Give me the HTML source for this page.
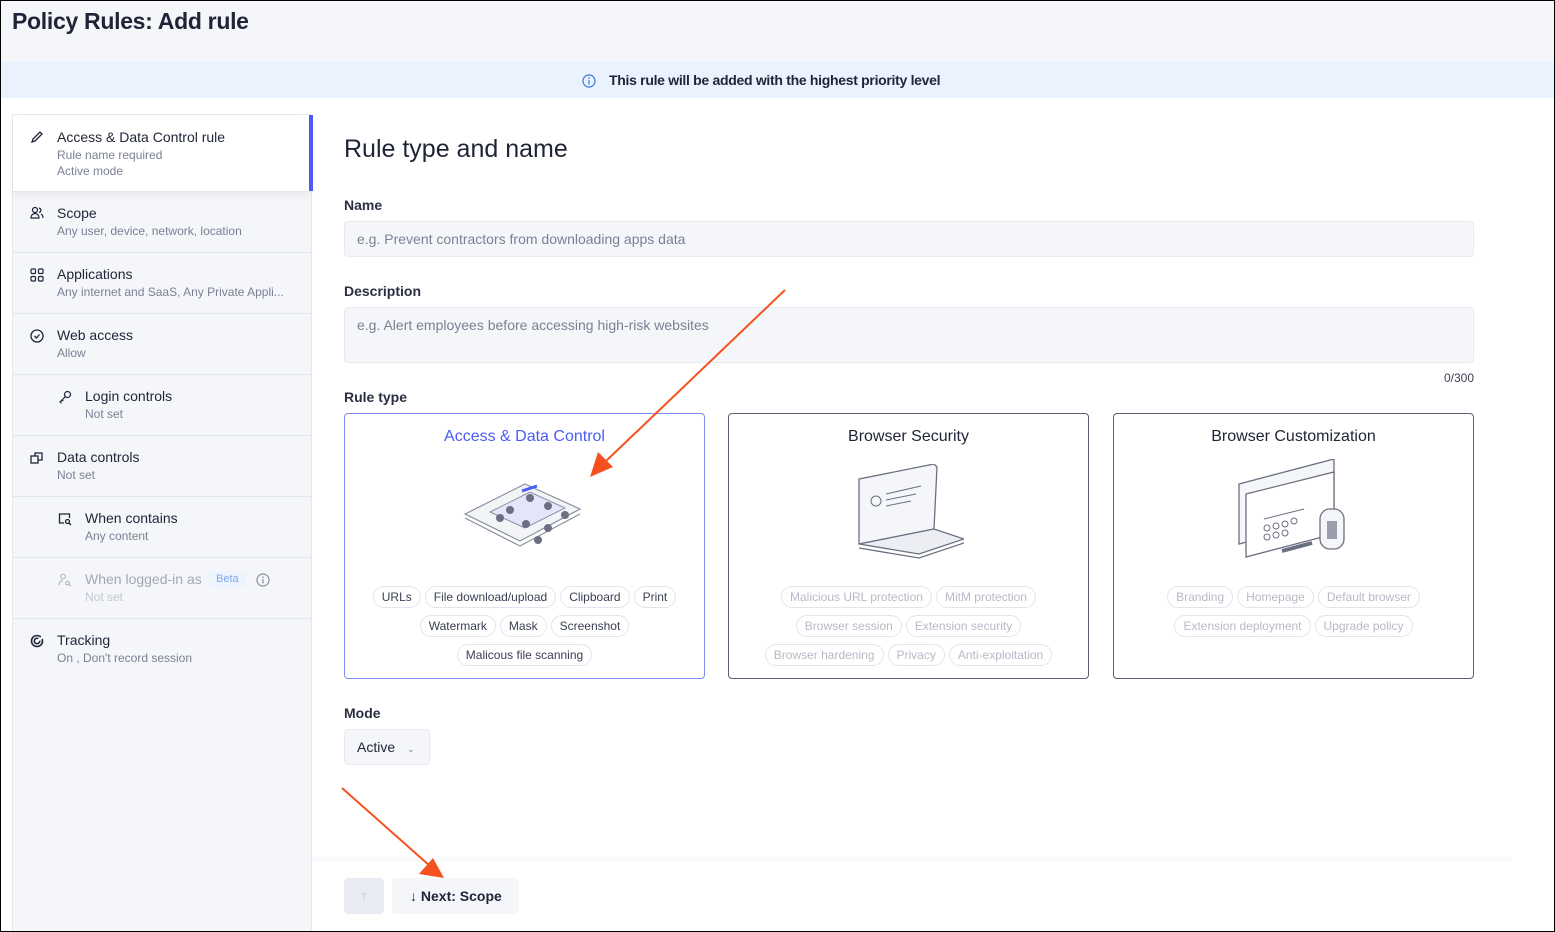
<!DOCTYPE html>
<html><head><meta charset="utf-8"><style>
*{box-sizing:border-box;margin:0;padding:0}
body{width:1555px;height:932px;overflow:hidden;font-family:"Liberation Sans",sans-serif;color:#1f2437;background:#fff;position:relative}
.frame{position:absolute;inset:0;border:1px solid #000;z-index:50;pointer-events:none}
.hdr{position:absolute;left:0;top:0;width:1555px;height:62px;background:#f5f6fa}
.hdr h1{position:absolute;left:12px;top:8px;font-size:23px;font-weight:bold;color:#1f2437;letter-spacing:-0.3px}
.ban{position:absolute;left:0;top:62px;width:1555px;height:36px;background:#eaf2fd;font-size:14px;font-weight:bold;color:#1f2437}
.ban span{position:absolute;left:609px;top:10px;letter-spacing:-0.3px}
.side{position:absolute;left:12px;top:114px;width:300px;height:818px;background:#f5f6fa;border:1px solid #e6e8ee}
.it{position:absolute;left:0;width:298px;border-bottom:1px solid #e3e5ec}
.it .t{position:absolute;font-size:14px;color:#1f2437}
.it .s{position:absolute;font-size:12px;color:#7b8194;line-height:16px}
.ic{position:absolute;width:14px;height:14px}
.main h2{position:absolute;left:344px;top:135px;font-size:25px;font-weight:normal;color:#1f2437}
.lbl{position:absolute;left:344px;font-size:14px;font-weight:bold;color:#2a2f42}
.inp{position:absolute;left:344px;width:1130px;background:#f5f6fa;border:1px solid #e8eaf0;border-radius:4px;font-size:14px;color:#7b8194;padding:10px 12px}
.card{position:absolute;top:413px;width:361px;height:266px;border:1px solid #5b5f72;border-radius:4px;text-align:center}
.card .ct{position:absolute;left:0;right:0;top:14px;font-size:16px;color:#1f2437}
.tags{position:absolute;left:6px;right:6px;top:172px;text-align:center;line-height:0}
.tag{display:inline-block;font-size:12px;line-height:14px;padding:3px 8px;border:1px solid #e3e5ec;border-radius:12px;margin:0 2px 7px;color:#3b4054}
.dis .tag{color:#b7bac6}
</style></head><body>
<div class="frame"></div>
<div class="hdr"><h1>Policy Rules: Add rule</h1></div>
<div class="ban"><svg style="position:absolute;left:582px;top:12px" width="14" height="14" viewBox="0 0 14 14"><circle cx="7" cy="7" r="6" fill="none" stroke="#3b73e0" stroke-width="1.2"/><rect x="6.4" y="6" width="1.2" height="4.5" fill="#3b73e0"/><circle cx="7" cy="4.2" r=".8" fill="#3b73e0"/></svg><span>This rule will be added with the highest priority level</span></div>

<div class="side">
 <div class="it" style="top:0;height:77px;background:#fff;box-shadow:0 4px 8px rgba(0,0,0,.05)">
  <div style="position:absolute;right:-2px;top:0;width:4px;height:76px;background:#4a5cf5"></div>
  <svg class="ic" style="left:17px;top:15px" viewBox="0 0 14 14"><path d="M2 12l1-3 7-7 2 2-7 7z" fill="none" stroke="#1f2437" stroke-width="1.3"/></svg>
  <div class="t" style="left:44px;top:14px">Access &amp; Data Control rule</div>
  <div class="s" style="left:44px;top:32px">Rule name required<br>Active mode</div></div>
 <div class="it" style="top:77px;height:61px">
  <svg class="ic" style="left:17px;top:14px" viewBox="0 0 14 14"><circle cx="5" cy="4" r="2.5" fill="none" stroke="#1f2437" stroke-width="1.2"/><path d="M1 12c0-3 2-4.5 4-4.5s4 1.5 4 4.5zM9 2a2.3 2.3 0 010 4.5M11 8c1.5.7 2 2 2 4" fill="none" stroke="#1f2437" stroke-width="1.2"/></svg>
  <div class="t" style="left:44px;top:13px">Scope</div><div class="s" style="left:44px;top:31px">Any user, device, network, location</div></div>
 <div class="it" style="top:138px;height:61px">
  <svg class="ic" style="left:17px;top:15px" viewBox="0 0 14 14"><g fill="none" stroke="#1f2437" stroke-width="1.2"><rect x="1" y="1" width="4.5" height="4.5" rx="1"/><rect x="8.5" y="1" width="4.5" height="4.5" rx="1"/><rect x="1" y="8.5" width="4.5" height="4.5" rx="1"/><rect x="8.5" y="8.5" width="4.5" height="4.5" rx="1"/></g></svg>
  <div class="t" style="left:44px;top:13px">Applications</div><div class="s" style="left:44px;top:31px">Any internet and SaaS, Any Private Appli...</div></div>
 <div class="it" style="top:199px;height:61px">
  <svg class="ic" style="left:17px;top:15px" viewBox="0 0 14 14"><circle cx="7" cy="7" r="6" fill="none" stroke="#1f2437" stroke-width="1.3"/><path d="M4.5 7l2 2 3-3.5" fill="none" stroke="#1f2437" stroke-width="1.3"/></svg>
  <div class="t" style="left:44px;top:13px">Web access</div><div class="s" style="left:44px;top:31px">Allow</div></div>
 <div class="it" style="top:260px;height:61px">
  <svg class="ic" style="left:45px;top:15px" viewBox="0 0 14 14"><circle cx="9.5" cy="4.5" r="3" fill="none" stroke="#1f2437" stroke-width="1.2"/><path d="M7.5 6.5L2 12l1.5 1.2M4 10l1.3 1.2" fill="none" stroke="#1f2437" stroke-width="1.2"/></svg>
  <div class="t" style="left:72px;top:13px">Login controls</div><div class="s" style="left:72px;top:31px">Not set</div></div>
 <div class="it" style="top:321px;height:61px">
  <svg class="ic" style="left:17px;top:15px" viewBox="0 0 14 14"><g fill="none" stroke="#1f2437" stroke-width="1.3"><rect x="1" y="5" width="7" height="7"/><path d="M5 5V2h7v7H8"/></g></svg>
  <div class="t" style="left:44px;top:13px">Data controls</div><div class="s" style="left:44px;top:31px">Not set</div></div>
 <div class="it" style="top:382px;height:61px">
  <svg class="ic" style="left:45px;top:15px" viewBox="0 0 14 14"><g fill="none" stroke="#1f2437" stroke-width="1.3"><path d="M6 11H1.5V2h10v4"/><circle cx="9.5" cy="9.5" r="2"/><path d="M11 11l2 2"/></g></svg>
  <div class="t" style="left:72px;top:13px">When contains</div><div class="s" style="left:72px;top:31px">Any content</div></div>
 <div class="it" style="top:443px;height:61px">
  <svg class="ic" style="left:45px;top:15px" viewBox="0 0 14 14"><g fill="none" stroke="#b7bac6" stroke-width="1.2"><circle cx="5" cy="3.5" r="2.3"/><path d="M1 12c0-3 2-4.5 4-4.5"/><circle cx="9.5" cy="10" r="1.8"/><path d="M11 11.5l2 1.5"/></g></svg>
  <div class="t" style="left:72px;top:13px;color:#a3a7b5">When logged-in as</div>
  <div style="position:absolute;left:196px;top:13px;background:#edf4fe;color:#7fa8ee;font-size:11px;padding:2px 7px;border-radius:3px">Beta</div>
  <svg style="position:absolute;left:243px;top:15px" width="14" height="14" viewBox="0 0 14 14"><circle cx="7" cy="7" r="6" fill="none" stroke="#8a8fa0" stroke-width="1.2"/><rect x="6.4" y="6" width="1.2" height="4.5" fill="#8a8fa0"/><circle cx="7" cy="4.2" r=".8" fill="#8a8fa0"/></svg>
  <div class="s" style="left:72px;top:31px;color:#c4c7d1">Not set</div></div>
 <div class="it" style="top:504px;height:61px;border:none">
  <svg class="ic" style="left:17px;top:15px" viewBox="0 0 14 14"><circle cx="7" cy="7" r="5.5" fill="none" stroke="#1f2437" stroke-width="1.6"/><circle cx="7" cy="7" r="2.7" fill="none" stroke="#1f2437" stroke-width="1.6"/><path d="M7 7l6-4" stroke="#fff" stroke-width="2.5"/></svg>
  <div class="t" style="left:44px;top:13px">Tracking</div><div class="s" style="left:44px;top:31px">On , Don't record session</div></div>
</div>

<div class="main">
<h2>Rule type and name</h2>
<div class="lbl" style="top:197px">Name</div>
<div class="inp" style="top:221px;height:36px;padding-top:9px">e.g. Prevent contractors from downloading apps data</div>
<div class="lbl" style="top:283px">Description</div>
<div class="inp" style="top:307px;height:56px;padding-top:9px">e.g. Alert employees before accessing high-risk websites</div>
<div style="position:absolute;left:1420px;top:371px;width:54px;text-align:right;font-size:12px;color:#3b4054">0/300</div>
<div class="lbl" style="top:389px">Rule type</div>

<div class="card" style="left:344px;border-color:#7d8cf6">
 <div class="ct" style="color:#4a5cf5">Access &amp; Data Control</div>
 <svg style="position:absolute;left:115px;top:60px" width="125" height="80" viewBox="0 0 125 80">
  <path d="M5 40l60-30 55 25-60 32z" fill="#f3f4f8" stroke="#8a8fa0" stroke-width="1.2"/>
  <path d="M5 44l55 28 60-32" fill="none" stroke="#8a8fa0" stroke-width="1.2"/>
  <path d="M30 38l40-20 35 16-40 20z" fill="#e3e6fb" stroke="#8a8fa0"/>
  <path d="M62 17l15-5" stroke="#4a5cf5" stroke-width="3"/>
  <g fill="#6b6f80"><circle cx="50" cy="36" r="4"/><circle cx="70" cy="24" r="4"/><circle cx="88" cy="32" r="4"/><circle cx="105" cy="41" r="4"/><circle cx="66" cy="50" r="4"/><circle cx="88" cy="54" r="4"/><circle cx="78" cy="66" r="4"/><circle cx="40" cy="44" r="4"/></g>
 </svg>
 <div class="tags"><span class="tag">URLs</span><span class="tag">File download/upload</span><span class="tag">Clipboard</span><span class="tag">Print</span><br><span class="tag">Watermark</span><span class="tag">Mask</span><span class="tag">Screenshot</span><br><span class="tag">Malicous file scanning</span></div>
</div>

<div class="card dis" style="left:728px">
 <div class="ct">Browser Security</div>
 <svg style="position:absolute;left:125px;top:50px" width="110" height="95" viewBox="0 0 110 95">
  <path d="M5 15l75-15 3 3-3 62-75 15z" fill="#f5f6fa" stroke="#6b6f80" stroke-width="1.3"/>
  <path d="M5 80l60 10 45-15-30-10z" fill="#eceef4" stroke="#6b6f80" stroke-width="1.3"/>
  <path d="M5 84l60 10 45-15" fill="none" stroke="#6b6f80" stroke-width="1.3"/>
  <circle cx="22" cy="37" r="5" fill="none" stroke="#6b6f80"/>
  <path d="M32 30l35-8M32 36l30-6M32 42l25-5" stroke="#6b6f80"/>
 </svg>
 <div class="tags"><span class="tag">Malicious URL protection</span><span class="tag">MitM protection</span><br><span class="tag">Browser session</span><span class="tag">Extension security</span><br><span class="tag">Browser hardening</span><span class="tag">Privacy</span><span class="tag">Anti-exploitation</span></div>
</div>

<div class="card dis" style="left:1113px">
 <div class="ct">Browser Customization</div>
 <svg style="position:absolute;left:120px;top:45px" width="115" height="100" viewBox="0 0 115 100">
  <path d="M5 25l95-25v60L5 85z" fill="#f5f6fa" stroke="#6b6f80" stroke-width="1.3"/>
  <path d="M12 35l88-22v62L12 98z" fill="#fff" stroke="#6b6f80" stroke-width="1.3"/>
  <path d="M30 60l40-10" stroke="#6b6f80"/>
  <g fill="none" stroke="#6b6f80"><circle cx="33" cy="69" r="3"/><circle cx="42" cy="67" r="3"/><circle cx="51" cy="65" r="3"/><circle cx="60" cy="62" r="3"/><circle cx="33" cy="78" r="3"/><circle cx="42" cy="76" r="3"/><circle cx="51" cy="74" r="3"/></g>
  <rect x="86" y="50" width="24" height="40" rx="10" fill="#f5f6fa" stroke="#6b6f80" stroke-width="1.3"/>
  <rect x="93" y="62" width="10" height="18" fill="#9a9eac"/>
  <path d="M48 92l30-8" stroke="#6b6f80" stroke-width="4"/>
 </svg>
 <div class="tags"><span class="tag">Branding</span><span class="tag">Homepage</span><span class="tag">Default browser</span><br><span class="tag">Extension deployment</span><span class="tag">Upgrade policy</span></div>
</div>

<div class="lbl" style="top:705px">Mode</div>
<div style="position:absolute;left:344px;top:729px;width:86px;height:36px;background:#f5f6fa;border:1px solid #e8eaf0;border-radius:4px;font-size:14px;padding:9px 12px;color:#1f2437">Active <span style="font-size:9px;color:#7b8194;margin-left:8px">&#8964;</span></div>

<div style="position:absolute;left:312px;top:856px;width:1200px;height:6px;background:#fafbfc"></div>
<div style="position:absolute;left:344px;top:878px;width:40px;height:36px;background:#e9ebf2;border-radius:4px;color:#c4c7d1;font-size:13px;text-align:center;line-height:36px">↑</div>
<div style="position:absolute;left:392px;top:878px;width:127px;height:36px;background:#f5f6fa;border-radius:4px;font-size:14px;font-weight:bold;line-height:36px;padding-left:18px;color:#1f2437">↓ Next: Scope</div>
</div>

<svg style="position:absolute;left:0;top:0;z-index:40" width="1555" height="932">
 <line x1="785" y1="290" x2="605" y2="462" stroke="#f4511e" stroke-width="2"/>
 <path d="M590 477l8-25 15 15z" fill="#f4511e"/>
 <line x1="342" y1="788" x2="430" y2="866" stroke="#f4511e" stroke-width="2"/>
 <path d="M444 878l-25-4 14-16z" fill="#f4511e"/>
</svg>
</body></html>
